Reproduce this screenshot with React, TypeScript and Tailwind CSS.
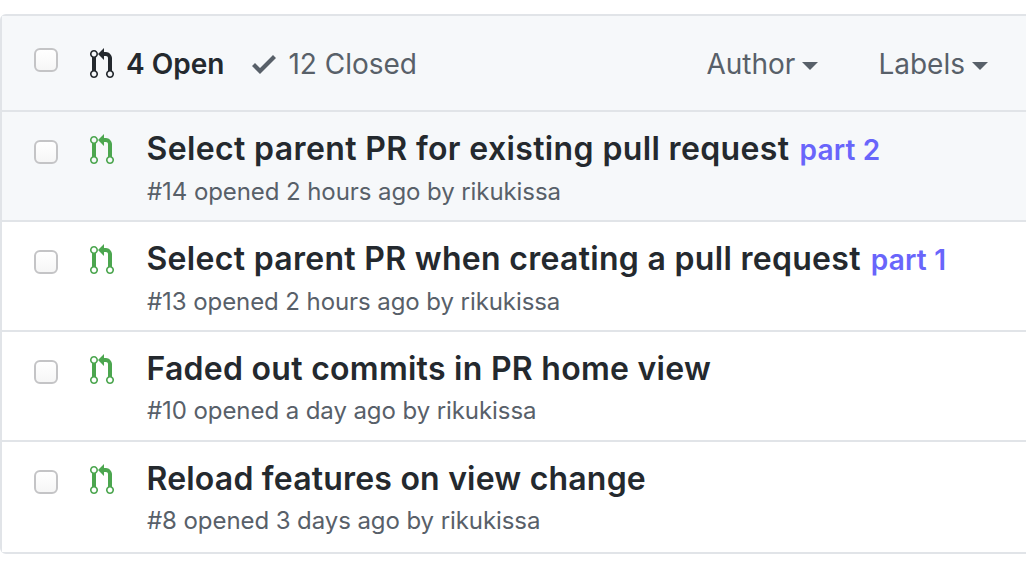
import React from "react";

const prPath =
  "M11 11.28V5c-.03-.78-.34-1.47-.94-2.06C9.46 2.35 8.78 2.03 8 2H7V0L4 3l3 3V4h1c.27.02.48.11.69.31.21.2.3.42.31.69v6.28A1.993 1.993 0 0 0 10 15a1.993 1.993 0 0 0 1-3.72zm-1 2.92c-.66 0-1.2-.55-1.2-1.2 0-.65.55-1.2 1.2-1.2.65 0 1.2.55 1.2 1.2 0 .65-.55 1.2-1.2 1.2zM4 3c0-1.11-.89-2-2-2a1.993 1.993 0 0 0-1 3.72v6.56A1.993 1.993 0 0 0 2 15a1.993 1.993 0 0 0 1-3.72V4.72c.59-.34 1-.98 1-1.72zm-.8 10c0 .66-.55 1.2-1.2 1.2-.65 0-1.2-.55-1.2-1.2 0-.65.55-1.2 1.2-1.2.65 0 1.2.55 1.2 1.2zM2 4.2C1.34 4.2.8 3.65.8 3c0-.65.55-1.2 1.2-1.2.65 0 1.2.55 1.2 1.2 0 .65-.55 1.2-1.2 1.2z";

function PrIcon({ className }: { className: string }) {
  return (
    <svg viewBox="0 0 12 16" width={24} height={32} className={className} fill="currentColor">
      <path fillRule="evenodd" d={prPath} />
    </svg>
  );
}

function Box() {
  return (
    <span className="block w-6 h-6 shrink-0 rounded-[6px] border-2 border-[#c4c4c6] bg-gradient-to-b from-white to-[#f6f6f6]" />
  );
}

function Caret() {
  return (
    <span className="inline-block ml-[7px] w-0 h-0 border-x-[8px] border-x-transparent border-t-[8px] border-t-[#586069] mt-1" />
  );
}

const rows = [
  { t: "Select parent PR for existing pull request", p: "part 2", s: "#14 opened 2 hours ago by rikukissa", bg: "bg-[#f6f8fa]", h: "h-[110px]", tr: "tracking-[0.37px]" },
  { t: "Select parent PR when creating a pull request", p: "part 1", s: "#13 opened 2 hours ago by rikukissa", bg: "bg-white", h: "h-[110px]", tr: "tracking-[0.3px]" },
  { t: "Faded out commits in PR home view", p: "", s: "#10 opened a day ago by rikukissa", bg: "bg-white", h: "h-[110px]", tr: "tracking-[0.27px]" },
  { t: "Reload features on view change", p: "", s: "#8 opened 3 days ago by rikukissa", bg: "bg-white", h: "h-[112px]", tr: "tracking-[0.2px]" },
];

export default function App() {
  return (
    <div className="w-[1026px] h-[568px] overflow-hidden bg-white pt-[14px] font-['Inter',sans-serif]">
      <div className="w-[1040px] border-2 border-[#e1e4e8] rounded-l-[6px]">
        <div className="h-[94px] bg-[#f6f8fa] flex items-center pl-[32px] pr-[50px] pt-[2px]">
          <span className="mb-[8px]">
            <Box />
          </span>
          <PrIcon className="ml-[32px] text-[#24292e]" />
          <span className="ml-[12px] text-[28px] font-semibold text-[#24292e]">4 Open</span>
          <svg viewBox="0 0 12 16" width={24} height={32} className="ml-[28px] text-[#586069]" fill="currentColor">
            <path fillRule="evenodd" d="M12 5l-8 8-4-4 1.5-1.5L4 10l6.5-6.5L12 5z" />
          </svg>
          <span className="ml-[12px] text-[28px] text-[#586069]">12 Closed</span>
          <span className="ml-auto flex items-center text-[28px] text-[#586069]">
            Author
            <Caret />
          </span>
          <span className="ml-[60px] flex items-center text-[28px] text-[#586069]">
            Labels
            <Caret />
          </span>
        </div>
        {rows.map((r) => (
          <div key={r.t} className={`${r.h} border-t-2 border-[#e1e4e8] flex pl-[32px] ${r.bg}`}>
            <div className="pt-[28px]">
              <Box />
            </div>
            <div className="pt-[22px] ml-[32px]">
              <PrIcon className="text-[#4ca64f]" />
            </div>
            <div className="ml-[32.5px] pt-[17px]">
              <div className={`text-[32px] leading-[40px] font-semibold ${r.tr} text-[#24292e] whitespace-nowrap`}>
                {r.t}
                {r.p && <span className="ml-[10px] text-[28px] tracking-[0.2px] text-[#6965fb]">{r.p}</span>}
              </div>
              <div className="mt-[7px] ml-[0.5px] text-[24px] leading-[30px] tracking-[-0.08px] text-[#586069] whitespace-nowrap">{r.s}</div>
            </div>
          </div>
        ))}
      </div>
    </div>
  );
}
